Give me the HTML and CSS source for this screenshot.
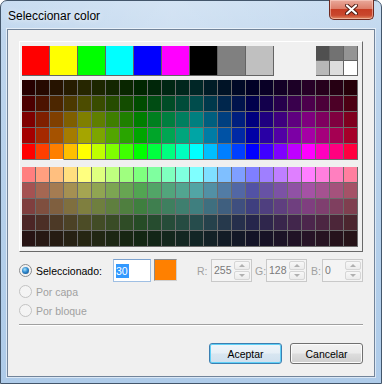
FILE: index.html
```html
<!DOCTYPE html>
<html lang="es">
<head>
<meta charset="UTF-8">
<meta name="viewport" content="width=device-width, initial-scale=1.0">
<title>Seleccionar color</title>
<link rel="stylesheet" href="styles.css">
</head>
<body>
<div class="window">
  <div class="titlebar">
    <span class="title">Seleccionar color</span>
    <div class="close-btn">
      <svg width="13" height="11" viewBox="0 0 13 11">
        <path d="M2 1.5 L11 9.5 M11 1.5 L2 9.5" stroke="#4d1a12" stroke-width="4" stroke-linecap="round"/>
        <path d="M2 1.5 L11 9.5 M11 1.5 L2 9.5" stroke="#ffffff" stroke-width="2.2" stroke-linecap="round"/>
      </svg>
    </div>
  </div>

  <div class="client">
    <div class="palette">
      <div class="main-row">
        <div class="basics" id="basics"></div>
        <div class="grays" id="grays"></div>
      </div>
      <div class="aci-grid" id="darkGrid"></div>
      <div class="aci-grid lower" id="lightGrid"></div>
    </div>

    <div class="option-row">
      <span class="radio checked"></span>
      <span class="opt-label wide">Seleccionado:</span>
      <div class="index-box"><span class="sel">30</span></div>
      <div class="preview"></div>

      <span class="rgb-label first">R:</span>
      <div class="spin-box">
        <span class="val">255</span>
        <div class="spin"><span class="up"></span><span class="down"></span></div>
      </div>
      <span class="rgb-label">G:</span>
      <div class="spin-box">
        <span class="val">128</span>
        <div class="spin"><span class="up"></span><span class="down"></span></div>
      </div>
      <span class="rgb-label last">B:</span>
      <div class="spin-box">
        <span class="val">0</span>
        <div class="spin"><span class="up"></span><span class="down"></span></div>
      </div>
    </div>

    <div class="option-row small disabled">
      <span class="radio"></span>
      <span class="opt-label">Por capa</span>
    </div>
    <div class="option-row small disabled">
      <span class="radio"></span>
      <span class="opt-label">Por bloque</span>
    </div>

    <div class="separator"></div>

    <div class="button-row">
      <button class="btn default">Aceptar</button>
      <button class="btn">Cancelar</button>
    </div>
  </div>
</div>

<script>
  var basics = ['#ff0000', '#ffff00', '#00ff00', '#00ffff', '#0000ff', '#ff00ff', '#000000', '#808080', '#c0c0c0'];
  var grays = ['#505050', '#727272', '#949494', '#b8b8b8', '#dcdcdc', '#ffffff'];
  var levels = [0, 63, 127, 191, 255];

  function addSwatches(id, colors, cls) {
    var box = document.getElementById(id);
    colors.forEach(function(c) {
      var sw = document.createElement('div');
      sw.className = cls;
      sw.style.background = c;
      box.appendChild(sw);
    });
  }

  // 24 hues of the index palette, 15 degrees apart
  function hueColor(i) {
    var s = i % 4;
    var up = levels[s], down = levels[4 - s];
    switch (Math.floor(i / 4)) {
      case 0: return [255, up, 0];
      case 1: return [down, 255, 0];
      case 2: return [0, 255, up];
      case 3: return [0, down, 255];
      case 4: return [up, 0, 255];
      default: return [255, 0, down];
    }
  }

  function pale(c) {
    return c.map(function(v) { return Math.round(127 + v * 128 / 255); });
  }

  function shade(c, f) {
    return 'rgb(' + c.map(function(v) { return Math.round(v * f / 255); }).join(',') + ')';
  }

  function fillGrid(id, factors, usePale) {
    var colors = [];
    factors.forEach(function(f) {
      for (var i = 0; i < 24; i++) {
        var base = hueColor(i);
        if (usePale) base = pale(base);
        colors.push(shade(base, f));
      }
    });
    addSwatches(id, colors, 'cell');
  }

  addSwatches('basics', basics, 'swatch-big');
  addSwatches('grays', grays, 'swatch-gray');
  fillGrid('darkGrid', [38, 76, 127, 165, 255], false);
  fillGrid('lightGrid', [255, 165, 127, 76, 38], true);

  // color 30 is selected: bottom row of the upper block, third hue
  document.getElementById('darkGrid').children[4 * 24 + 2].classList.add('selected');
</script>
</body>
</html>
```

FILE: styles.css
```css
body {
  margin: 0;
  background: #ffffff;
  font-family: "Liberation Sans", Arial, sans-serif;
}

.window {
  position: relative;
  width: 382px;
  height: 384px;
  box-sizing: border-box;
  border: 1px solid #43566b;
  border-radius: 7px 7px 0 0;
  padding: 0 6px 6px 6px;
  background: linear-gradient(180deg, #c6dbf0 0%, #bed5ed 10%, #b4cfea 60%, #aecbe9 100%);
}

.titlebar {
  height: 28px;
  display: flex;
  align-items: center;
  background: linear-gradient(90deg, rgba(255,255,255,0.05), rgba(255,255,255,0.25) 45%, rgba(255,255,255,0.05));
  margin: 0 -6px;
  padding: 0 7px;
}

.title {
  font-size: 12px;
  color: #000;
  text-shadow: 0 0 6px #ffffff;
  margin-top: 1px;
}

.close-btn {
  position: absolute;
  top: -1px;
  right: 7px;
  width: 45px;
  height: 20px;
  box-sizing: border-box;
  border: 1px solid #6e2a20;
  border-top: none;
  border-radius: 0 0 5px 5px;
  background: linear-gradient(180deg, #e9a99b 0%, #dd7f6b 45%, #c63d24 50%, #c9472e 80%, #e08a63 100%);
  box-shadow: inset 0 0 0 1px rgba(255, 220, 210, 0.5);
  display: flex;
  align-items: center;
  justify-content: center;
}

.client {
  height: 348px;
  box-sizing: border-box;
  border: 1px solid #72849a;
  background: #f0f0f0;
  padding: 11px;
  box-shadow: 0 0 0 1px rgba(255, 255, 255, 0.55);
}

/* color palette */
.palette {
  border: 1px solid;
  border-color: #ffffff #696969 #696969 #ffffff;
  padding: 4px 4px 4px 2px;
}

.main-row {
  display: flex;
  height: 30px;
}

.basics {
  display: flex;
}

.swatch-big {
  width: 28px;
  height: 30px;
  box-sizing: border-box;
  border-right: 1px solid #646464;
  border-bottom: 1px solid #646464;
}

.grays {
  margin-left: auto;
  display: grid;
  grid-template-columns: repeat(3, 14px);
}

.swatch-gray {
  height: 15px;
  box-sizing: border-box;
  border-right: 1px solid #646464;
  border-bottom: 1px solid #646464;
}

.aci-grid {
  display: grid;
  grid-template-columns: repeat(24, 14px);
  margin-top: 4px;
}

.aci-grid.lower {
  margin-top: 7px;
}

.cell {
  height: 16px;
  box-sizing: border-box;
  border-right: 1px solid #6b6b6b;
  border-bottom: 1px solid #6b6b6b;
}

.cell.selected {
  border-bottom-color: #ffffff;
}

/* options */
.option-row {
  display: flex;
  align-items: center;
  height: 23px;
  margin-top: 7px;
  font-size: 10.5px;
  color: #000;
}

.option-row.small {
  height: 19px;
  margin-top: 0;
}

.option-row.disabled {
  color: #a0a0a0;
}

.radio {
  position: relative;
  width: 13px;
  height: 13px;
  box-sizing: border-box;
  border-radius: 50%;
  border: 1px solid #8a8c8e;
  background: radial-gradient(circle at 50% 50%, #dcdcdc 0%, #f6f6f6 70%);
  margin-right: 4px;
  flex: none;
}

.radio.checked::after {
  content: "";
  position: absolute;
  left: 2px;
  top: 2px;
  width: 7px;
  height: 7px;
  border-radius: 50%;
  background: radial-gradient(circle at 40% 35%, #a6e2fb 0%, #2f8ad0 45%, #0d3f72 100%);
}

.disabled .radio {
  border-color: #c3c3c3;
  background: #f4f4f4;
}

.opt-label.wide {
  width: 77px;
}

.index-box {
  width: 38px;
  height: 23px;
  box-sizing: border-box;
  border: 1px solid #9fbfe3;
  border-top-color: #7da2ce;
  background: #ffffff;
  padding-left: 2px;
  display: flex;
  align-items: center;
}

.index-box .sel {
  background: #3399ff;
  color: #ffffff;
  line-height: 14px;
  padding: 0 1px 0 0;
}

.preview {
  width: 23px;
  height: 22px;
  align-self: flex-start;
  margin-left: 3px;
  box-sizing: border-box;
  border: 1px solid;
  border-color: #8c8c8c #cfcfcf #cfcfcf #8c8c8c;
  background: #ff8000;
}

.rgb-label {
  color: #a0a0a0;
  width: 11px;
  margin-left: 3px;
}

.rgb-label.first {
  width: 14px;
  margin-left: 20px;
}

.rgb-label.last {
  margin-left: 4px;
}

.spin-box {
  width: 41px;
  height: 23px;
  box-sizing: border-box;
  border: 1px solid #c9c9c9;
  background: #f4f4f4;
  display: flex;
  padding: 1px;
}

.spin-box .val {
  flex: 1;
  color: #7a7a7a;
  padding-left: 1px;
  line-height: 19px;
}

.spin {
  width: 16px;
  display: flex;
  flex-direction: column;
  gap: 1px;
}

.spin span {
  flex: 1;
  box-sizing: border-box;
  border: 1px solid #d6d6d6;
  border-radius: 2px;
  background: linear-gradient(180deg, #f7f7f7, #ececec);
  display: flex;
  align-items: center;
  justify-content: center;
}

.spin span::after {
  content: "";
  border-left: 3px solid transparent;
  border-right: 3px solid transparent;
}

.spin .up::after {
  border-bottom: 3px solid #b0b0b0;
}

.spin .down::after {
  border-top: 3px solid #b0b0b0;
}

.separator {
  margin-top: 4px;
  border-top: 1px solid #a0a0a0;
  border-bottom: 1px solid #ffffff;
}

.button-row {
  display: flex;
  justify-content: flex-end;
  gap: 8px;
  margin-top: 17px;
}

.btn {
  width: 73px;
  height: 21px;
  padding: 0;
  font-family: "Liberation Sans", Arial, sans-serif;
  font-size: 10.5px;
  color: #000;
  border: 1px solid #707070;
  border-radius: 3px;
  background: linear-gradient(180deg, #f2f2f2 0%, #ebebeb 48%, #dddddd 52%, #cfcfcf 100%);
  box-shadow: inset 0 0 0 1px #fbfbfb;
}

.btn.default {
  border-color: #3c7fb1;
  background: linear-gradient(180deg, #f0f6fa 0%, #e6eff6 48%, #d8e6f1 52%, #cfe0ee 100%);
  box-shadow: inset 0 0 0 1px #5fd0f7;
}
```
